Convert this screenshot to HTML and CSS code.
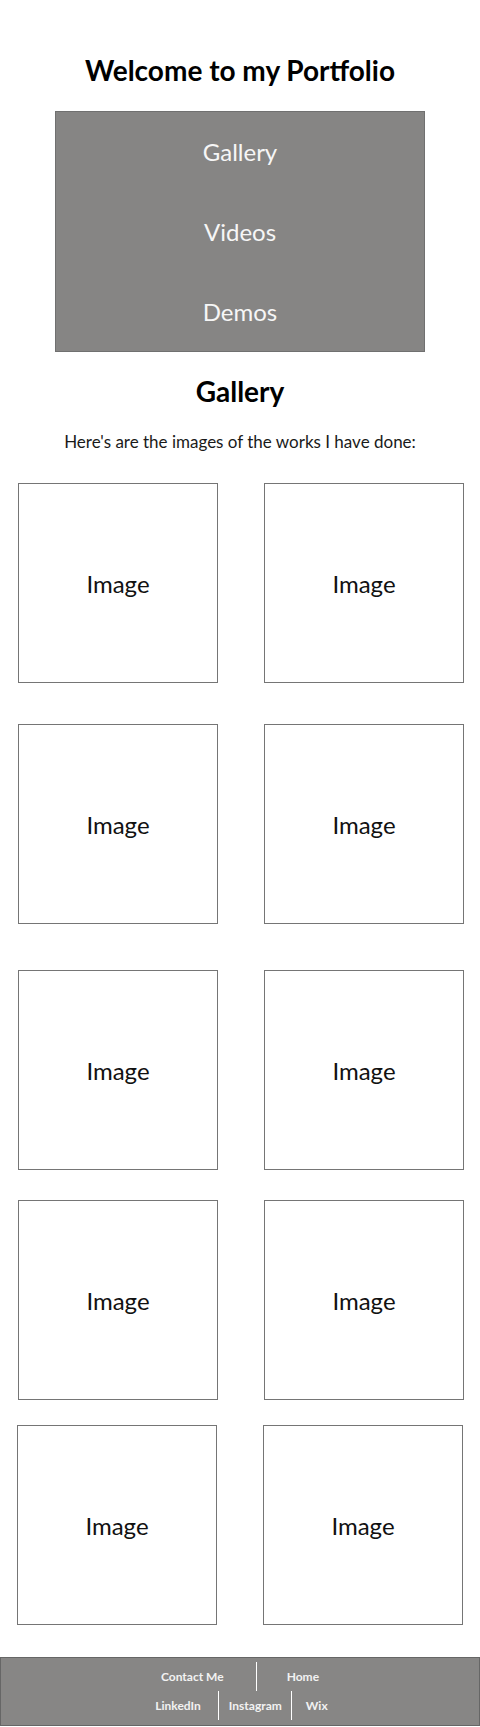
FILE: index.html
```html
<!DOCTYPE html>
<html lang="en">
<head>
  <meta charset="UTF-8" />
  <meta name="viewport" content="width=device-width, initial-scale=1.0"/>
  <title>My Portfolio</title>
  <link rel="stylesheet" href="styles.css">
</head>
<body>
<header class="top">
  <h1 class="site-title">Welcome to my Portfolio</h1>
  <nav class="main-nav">
    <a href="#gallery">Gallery</a>
    <a href="#videos">Videos</a>
    <a href="#demos">Demos</a>
  </nav>
</header>

<main>
  <section class="gallery" id="gallery">
    <h2>Gallery</h2>
    <p class="intro">Here's are the images of the works I have done:</p>

    <div class="row row-1">
      <div class="pic">Image</div>
      <div class="pic">Image</div>
    </div>
    <div class="row row-2">
      <div class="pic">Image</div>
      <div class="pic">Image</div>
    </div>
    <div class="row row-3">
      <div class="pic">Image</div>
      <div class="pic">Image</div>
    </div>
    <div class="row row-4">
      <div class="pic">Image</div>
      <div class="pic">Image</div>
    </div>
    <div class="row row-5">
      <div class="pic">Image</div>
      <div class="pic">Image</div>
    </div>
  </section>
</main>

<footer>
  <ul class="foot-row">
    <li class="contact"><a href="#">Contact Me</a></li>
    <li class="home"><a href="#">Home</a></li>
  </ul>
  <ul class="foot-row">
    <li class="linkedin"><a href="#">LinkedIn</a></li>
    <li class="insta"><a href="#">Instagram</a></li>
    <li class="wix"><a href="#">Wix</a></li>
  </ul>
</footer>
</body>
</html>
```

FILE: styles.css
```css
* { box-sizing: border-box; margin: 0; padding: 0; }
body {
  font-family: 'Lato', 'Open Sans', sans-serif;
  background: #fff;
  color: #000;
}

.top {
  padding-top: 53px;
  text-align: center;
}
.site-title {
  font-size: 28px;
  line-height: 34px;
  font-weight: 700;
}
.main-nav {
  width: 370px;
  height: 241px;
  margin: 24px auto 0;
  background: #868584;
  border: 1px solid #707070;
  display: flex;
  flex-direction: column;
}
.main-nav a {
  flex: 1;
  display: flex;
  align-items: center;
  justify-content: center;
  color: #f6f6f6;
  text-decoration: none;
  font-size: 24px;
}

.gallery {
  text-align: center;
}
.gallery h2 {
  margin-top: 22px;
  font-size: 28px;
  line-height: 34px;
  font-weight: 700;
}
.intro {
  margin-top: 22px;
  font-size: 17px;
  line-height: 24px;
  color: #1a1a1a;
}

.row {
  display: grid;
  grid-template-columns: 200px 200px;
  column-gap: 46px;
  padding-left: 18px;
}
.row-1 { margin-top: 29px; }
.row-2 { margin-top: 41px; }
.row-3 { margin-top: 46px; }
.row-4 { margin-top: 30px; }
.row-5 { margin-top: 25px; padding-left: 17px; }

.pic {
  height: 200px;
  border: 1px solid #757575;
  display: flex;
  align-items: center;
  justify-content: center;
  font-size: 24px;
  color: #111;
}

footer {
  margin-top: 32px;
  background: #878685;
  border: 1px solid #666;
  padding: 4px 0 5px;
}
.foot-row {
  list-style: none;
  display: flex;
  justify-content: center;
}
.foot-row li {
  height: 29px;
  line-height: 29px;
  font-size: 12px;
  font-weight: 700;
}
.foot-row a {
  color: #f2f2f2;
  text-decoration: none;
}
.contact { padding: 0 32px 0 30px; }
.home { padding: 0 30px; border-left: 1px solid #fff; }
.linkedin { padding: 0 17px; }
.insta { padding: 0 9px 0 10px; border-left: 1px solid #fff; border-right: 1px solid #fff; }
.wix { padding: 0 14px; }
```
